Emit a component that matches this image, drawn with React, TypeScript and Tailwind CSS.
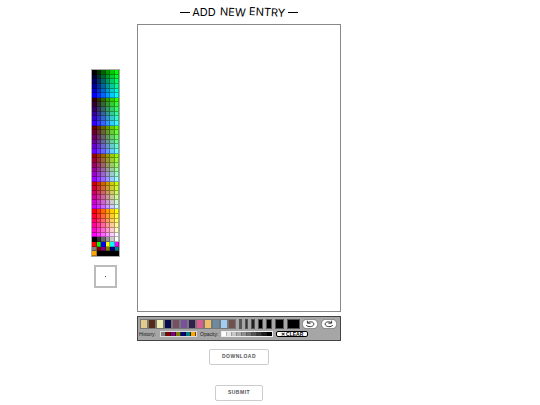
import React from 'react';

const LEVELS = [0, 51, 102, 153, 204, 255];

// red changes per block, blue per row, green per column
const websafe = LEVELS.flatMap((r) =>
  LEVELS.flatMap((b) => LEVELS.map((g) => `rgb(${r}, ${g}, ${b})`)),
);

const extras = [
  '#000000', '#333333', '#666666', '#999999', '#cccccc', '#ffffff',
  '#ff0000', '#00ff00', '#0000ff', '#ffff00', '#00ffff', '#ff00ff',
  '#808080', '#800000', '#800080', '#808000', '#000080', '#008080',
  '#ffa500', '#000000', '#000000', '#000000', '#000000', '#000000',
];

const palette = [...websafe, ...extras];

const swatches = [
  '#e0cd8b', '#552b18', '#eeebb0', '#090a4c', '#755061', '#79509b',
  '#30204d', '#d95f91', '#f0bd68', '#6d8ba0', '#a3cdf0', '#704f4f',
];

const history = ['#808080', '#800000', '#800080', '#808000', '#000080', '#008080', '#ffa500'];

const opacities = ['#fff', '#e3e3e3', '#c6c6c6', '#aaa', '#8e8e8e', '#717171', '#555', '#393939', '#1c1c1c', '#000'];

const brushes = [
  { size: 1, className: 'w-[3px] bg-[#555]' },
  { size: 2, className: 'w-[3px] bg-[#333]' },
  { size: 4, className: 'w-1 bg-[#222]' },
  { size: 6, className: 'w-[5px] bg-black' },
  { size: 8, className: 'w-1.5 bg-black' },
  { size: 12, className: 'w-[9px] bg-black' },
  { size: 16, className: 'w-[13px] bg-black' },
];

const ColorPicker: React.FC<{ onPick: (color: string) => void }> = ({ onPick }) => (
  <div className="grid h-[188px] w-[29px] grid-cols-6 border border-[#aaa] bg-[#333]">
    {palette.map((color, i) => (
      <button
        key={i}
        aria-label={color}
        className="min-h-0 min-w-0 border-r border-b border-black/30"
        style={{ backgroundColor: color }}
        onClick={() => onPick(color)}
      />
    ))}
  </div>
);

const UndoIcon: React.FC<{ className?: string }> = ({ className }) => (
  <svg viewBox="0 0 16 10" className={className} fill="none" stroke="#222" strokeWidth="0.9">
    <rect x="0.4" y="0.4" width="15.2" height="9.2" rx="4.2" fill="#fff" stroke="#555" strokeWidth="0.6" />
    <path d="M4.2 6c1 2.4 7.4 2.2 7.6-.8.1-2.4-3.4-3-6-1.6" />
    <path d="M5.4 1.7v2.5h3.2" />
  </svg>
);

const Toolbar: React.FC = () => (
  <div className="flex h-[25px] flex-col justify-between overflow-hidden border border-[#444] bg-[#a6a6a6] pt-0.5 pb-[3px]">
    <div className="flex items-center justify-between pr-[3px] pl-0.5">
      <div className="flex">
        {swatches.map((color) => (
          <button
            key={color}
            aria-label={color}
            className="h-[10px] w-2 border border-[#777]"
            style={{ backgroundColor: color }}
          />
        ))}
      </div>
      <div className="flex gap-[3px]">
        {brushes.map((brush) => (
          <button
            key={brush.size}
            aria-label={`Brush ${brush.size}`}
            className={`h-[10px] border border-[#555] ${brush.className}`}
          />
        ))}
      </div>
      <div className="flex gap-[3px]">
        <button aria-label="Undo">
          <UndoIcon className="h-[10px] w-4" />
        </button>
        <button aria-label="Redo">
          <UndoIcon className="h-[10px] w-4 -scale-x-100" />
        </button>
      </div>
    </div>
    <div className="flex items-center gap-[3px] pl-px text-[5px] leading-[6px] text-[#222]">
      <span className="w-[18px]">History:</span>
      <div className="flex h-1.5 border border-[#ddd]">
        {history.map((color) => (
          <button
            key={color}
            aria-label={color}
            className="w-[5px] border-r border-black/60"
            style={{ backgroundColor: color }}
          />
        ))}
      </div>
      <span className="w-[18px]">Opacity:</span>
      <div className="flex h-1.5 border border-[#eee]">
        {opacities.map((shade, i) => (
          <button
            key={shade}
            aria-label={`Opacity ${10 * (i + 1)}%`}
            className="w-[5px] border-r border-black/30"
            style={{ backgroundColor: shade }}
          />
        ))}
      </div>
      <button className="h-1.5 w-8 rounded-xs border border-black bg-white text-[5px] leading-[4px] font-bold text-black">
        ✕ CLEAR
      </button>
    </div>
  </div>
);

const Dash: React.FC = () => <span className="h-px w-2.5 bg-black" />;

export default function App() {
  const [, setColor] = React.useState('#000000');

  return (
    <main className="flex gap-[17px] bg-white pl-[91px] font-['Liberation_Sans',Arial,sans-serif] text-black">
      <aside className="flex flex-col items-center gap-2 pt-[69px]">
        <ColorPicker onPick={setColor} />
        <div className="flex size-[23px] items-center justify-center border-2 border-[#bbb] bg-white">
          <span className="size-px bg-[#444]" />
        </div>
      </aside>

      <section className="flex w-[38%] min-w-[204px] flex-col">
        <h1 className="flex h-6 items-center justify-center gap-0.5 font-['Inter','Open_Sans',sans-serif] text-[11px]">
          <Dash />
          <span className="flex gap-1">
            <span>ADD</span>
            <span className="rotate-3">NEW</span>
            <span className="rotate-3">ENTRY</span>
          </span>
          <Dash />
        </h1>
        <canvas className="mb-1 aspect-[204/288] w-full border border-[#888]" />
        <Toolbar />
        <div className="flex flex-col items-center gap-5 pt-2 text-[5px] font-bold tracking-widest text-[#555]">
          <button className="h-4 w-[60px] rounded-xs border border-[#ccc]">DOWNLOAD</button>
          <button className="h-4 w-12 rounded-xs border border-[#ccc]">SUBMIT</button>
        </div>
      </section>
    </main>
  );
}
